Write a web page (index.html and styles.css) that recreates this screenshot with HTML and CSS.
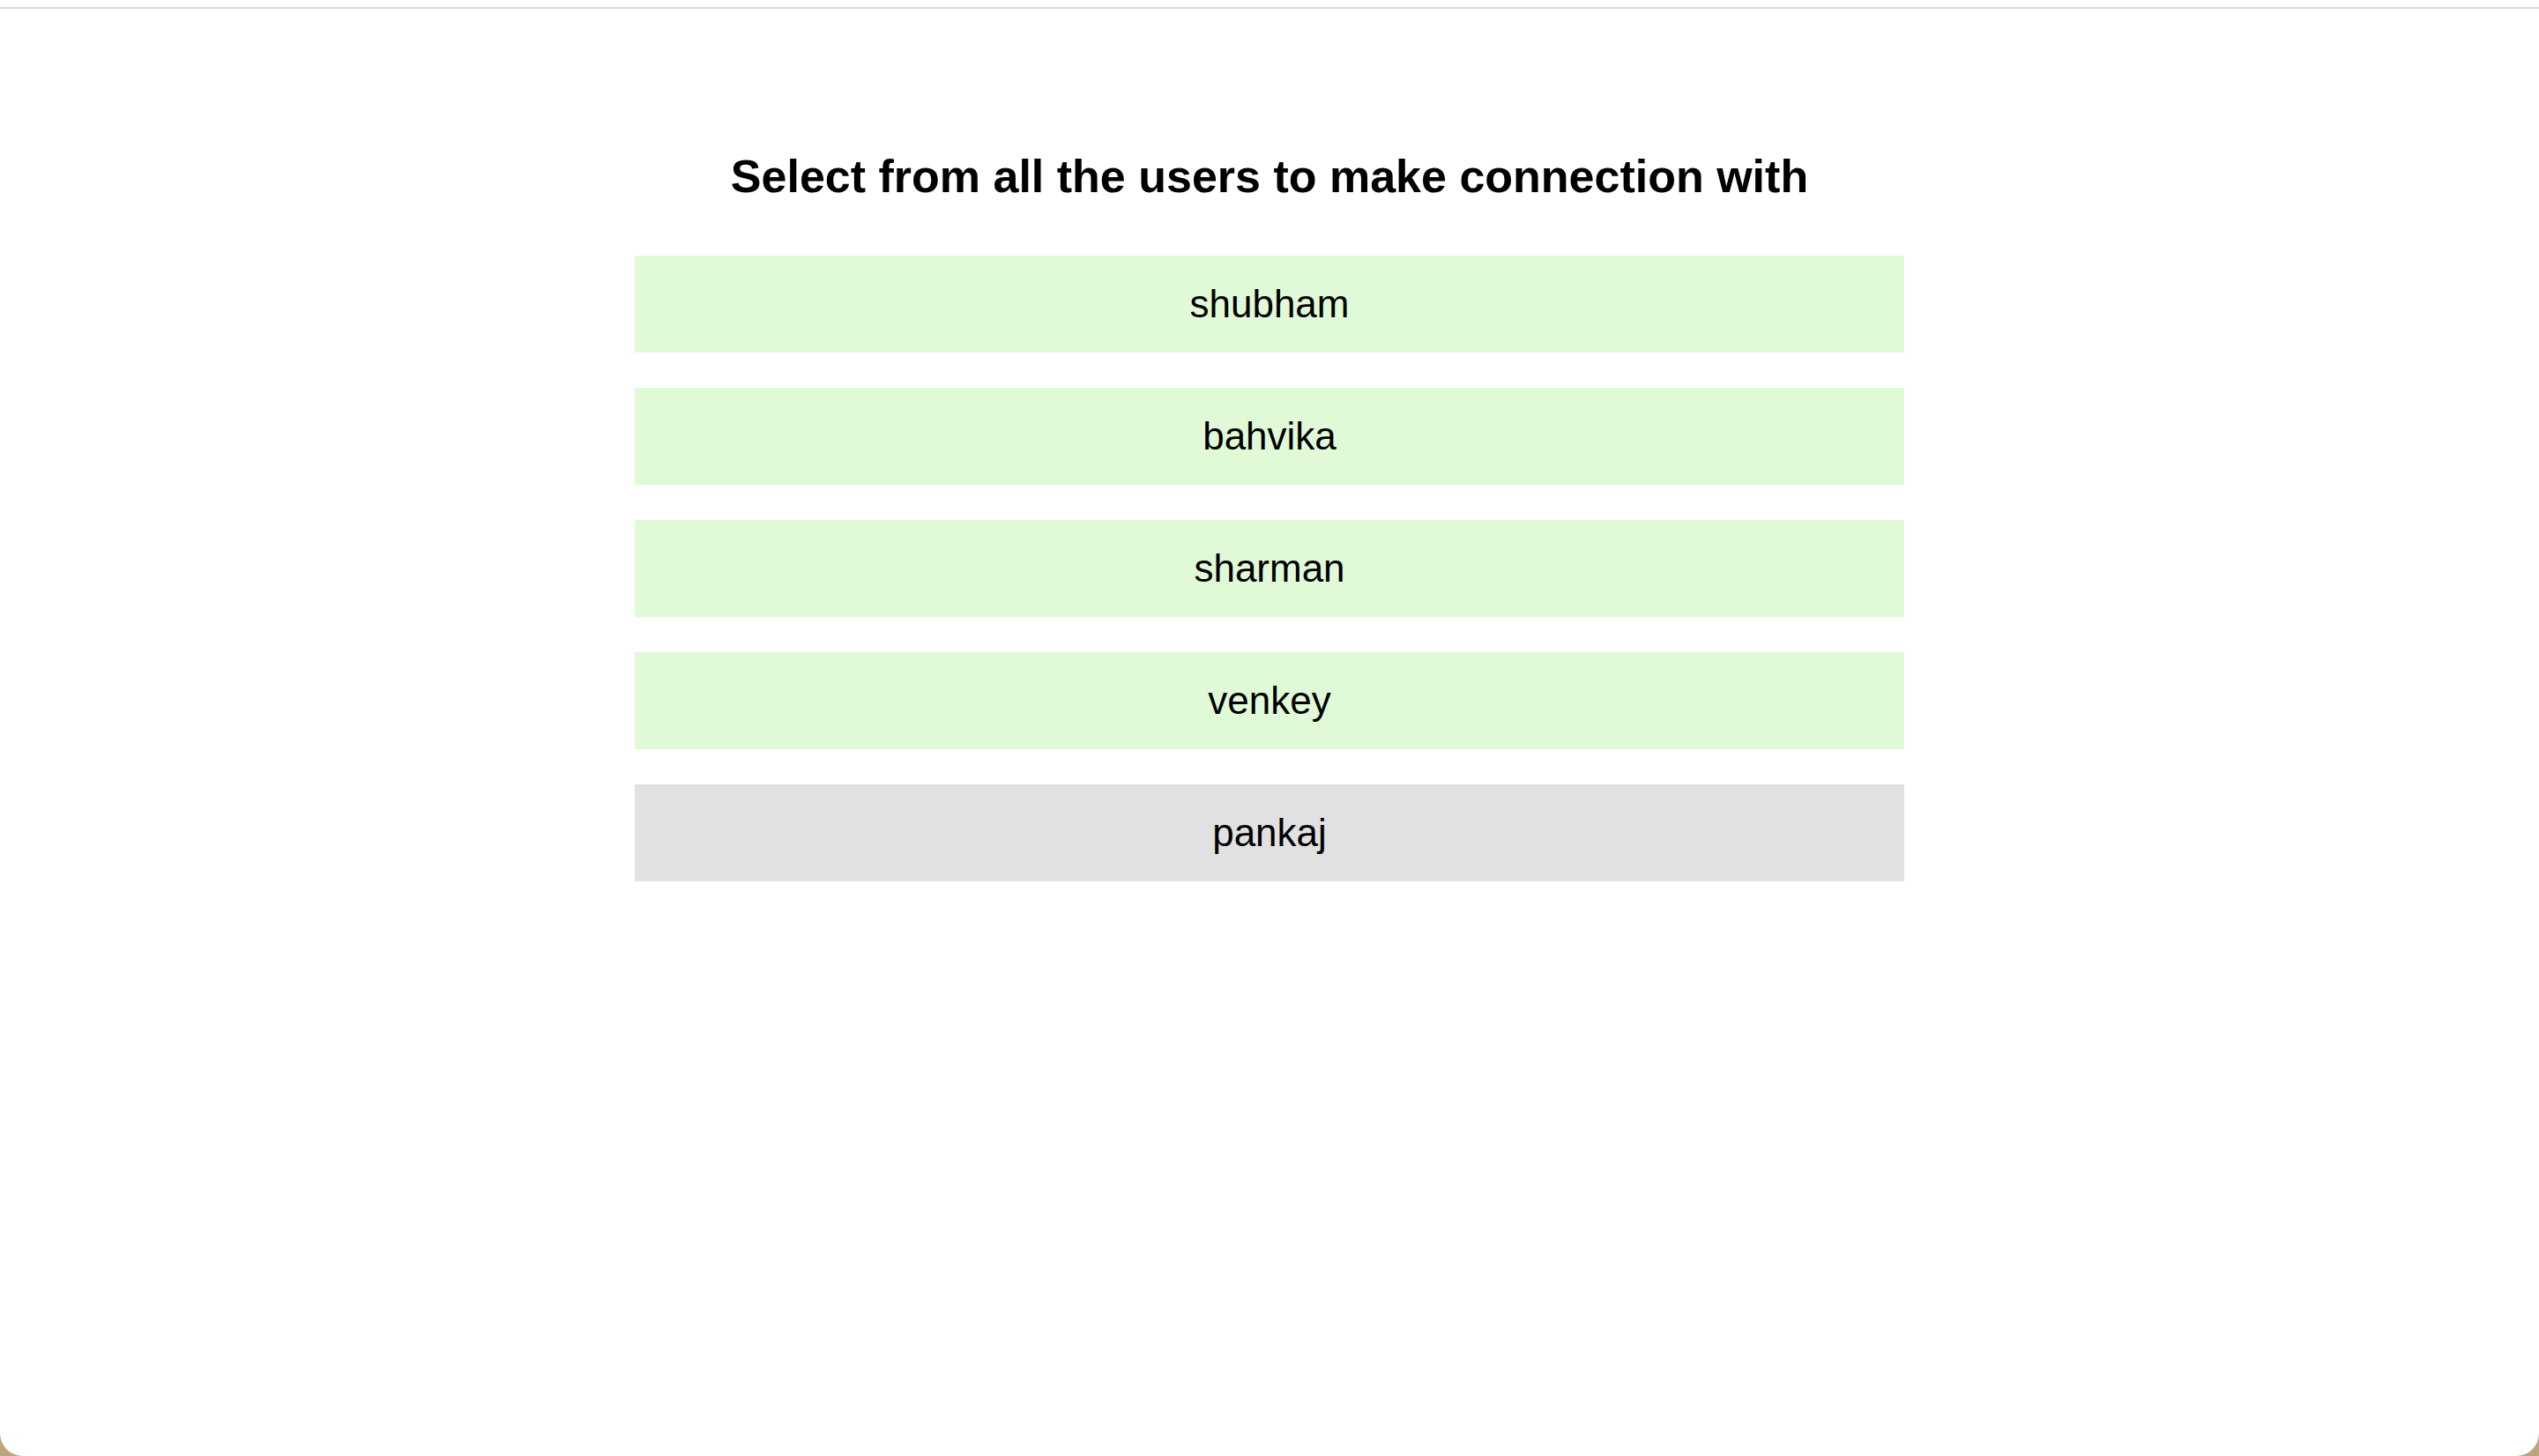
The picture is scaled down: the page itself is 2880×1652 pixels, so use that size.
FILE: index.html
```html
<!DOCTYPE html>
<html>
<head>
<meta charset="utf-8">
<link rel="stylesheet" href="styles.css">
</head>
<body>
<div class="window">
  <div class="topline"></div>
  <main class="content">
    <h1 class="title">Select from all the users to make connection with</h1>
    <ul class="users">
      <li class="user user-available">shubham</li>
      <li class="user user-available">bahvika</li>
      <li class="user user-available">sharman</li>
      <li class="user user-available">venkey</li>
      <li class="user user-self">pankaj</li>
    </ul>
  </main>
</div>
</body>
</html>
```

FILE: styles.css
```css
html, body {
  margin: 0;
  padding: 0;
}
body {
  background: #bca47c;
  font-family: "Liberation Sans", Arial, Helvetica, sans-serif;
  color: #000;
}
.window {
  background: #fff;
  height: 1652px;
  border-radius: 0 0 26px 26px;
  overflow: hidden;
}
.topline {
  margin-top: 8px;
  height: 2px;
  background: #d9d9d9;
}
.content {
  width: 1440px;
  margin: 0 auto;
  display: flex;
  flex-direction: column;
  align-items: stretch;
}
.title {
  margin: 160px 0 0 0;
  font-size: 52px;
  font-weight: bold;
  line-height: 60px;
  text-align: center;
}
.users {
  list-style: none;
  margin: 60px 0 0 0;
  padding: 0;
  display: flex;
  flex-direction: column;
  gap: 40px;
}
.user {
  height: 110px;
  display: flex;
  align-items: center;
  justify-content: center;
  font-size: 44px;
}
.user-available {
  background: #e0fad8;
}
.user-self {
  background: #e1e1e1;
}
```
